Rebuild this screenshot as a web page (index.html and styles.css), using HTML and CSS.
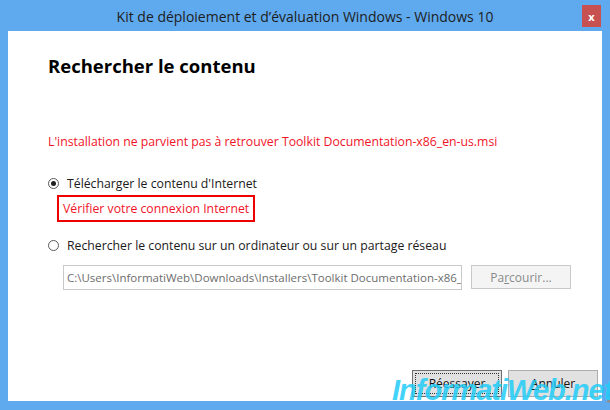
FILE: index.html
```html
<!DOCTYPE html>
<html lang="fr">

<head>
  <meta charset="UTF-8">
  <meta name="viewport" content="width=device-width, initial-scale=1.0">
  <title>Kit de déploiement et d'évaluation Windows</title>
  <link rel="stylesheet" href="styles.css">
</head>

<body>
  <div class="window">
    <!-- barre de titre -->
    <div class="titlebar">
      <span></span>
      <div class="title">Kit de déploiement et d’évaluation Windows - Windows 10</div>
      <div class="close">x</div>
    </div>

    <div class="content">
      <h1 class="heading">Rechercher le contenu</h1>

      <p class="error">L'installation ne parvient pas à retrouver Toolkit Documentation-x86_en-us.msi</p>

      <div class="options">
        <label class="option">
          <span class="radio checked"></span>
          Télécharger le contenu d'Internet
        </label>
        <div class="check-box">Vérifier votre connexion Internet</div>

        <label class="option second">
          <span class="radio"></span>
          Rechercher le contenu sur un ordinateur ou sur un partage réseau
        </label>
        <div class="path-row">
          <div class="path-field">C:\Users\InformatiWeb\Downloads\Installers\Toolkit Documentation-x86_en-us</div>
          <div class="btn disabled">Pa<u>r</u>courir...</div>
        </div>
      </div>

      <div class="actions">
        <div class="btn focused"><span class="focus-ring">Réessayer</span></div>
        <div class="btn"><u>A</u>nnuler</div>
      </div>
    </div>

    <!-- filigrane -->
    <div class="watermark">
      <span class="wm-text">InformatiWeb.net</span>
      <svg class="laptop" width="38" height="44" viewBox="0 0 38 44">
        <polygon points="12,2 36,6 34,30 10,28" fill="#2b3f8c" />
        <polygon points="14,5 33,8 31,27 12,25" fill="#3e78d8" />
        <path d="M17 12 L22 18 L28 11 M20 22 L24 16" stroke="#9fd0ff" stroke-width="1.5" fill="none" />
        <polygon points="10,28 34,30 24,42 0,38" fill="#8d8f93" />
        <polygon points="10,30 30,32 23,39 4,36" fill="#5f6166" />
      </svg>
    </div>
  </div>
</body>

</html>
```

FILE: styles.css
```css
body {
  margin: 0;
  font-family: "Open Sans", "Noto Sans", sans-serif;
  background: #5fa9ee;
}

.window {
  position: relative;
  width: 610px;
  height: 410px;
  background: #5fa9ee;
  display: flex;
  flex-direction: column;
  overflow: hidden;
}

.titlebar {
  height: 31px;
  display: grid;
  grid-template-columns: 1fr auto 1fr;
  align-items: center;
}

.title {
  font-size: 14px;
  color: #1d1d1d;
  padding-top: 1px;
}

.close {
  justify-self: end;
  align-self: start;
  margin: 5px 9px 0 0;
  width: 19px;
  height: 22px;
  background: #c75050;
  color: white;
  font-size: 11px;
  font-weight: bold;
  display: flex;
  align-items: center;
  justify-content: center;
}

.content {
  flex: 1;
  margin: 0 8px 9px 8px;
  background: white;
  padding: 0 4px 4px 40px;
  display: flex;
  flex-direction: column;
}

.heading {
  margin: 22px 0 0 0;
  font-size: 18.5px;
  font-weight: bold;
  color: #000;
}

.error {
  margin: 55px 0 0 0;
  font-size: 12.25px;
  color: #f01428;
}

.options {
  margin-top: 25px;
  font-size: 12.25px;
  color: #1a1a1a;
}

.option {
  display: flex;
  align-items: center;
  gap: 8px;
}

.option.second {
  margin-top: 15px;
}

.radio {
  width: 11px;
  height: 11px;
  border: 1px solid #5a5a5a;
  border-radius: 50%;
  box-sizing: border-box;
  display: flex;
  align-items: center;
  justify-content: center;
}

.radio.checked::after {
  content: "";
  width: 5px;
  height: 5px;
  border-radius: 50%;
  background: #222;
}

.check-box {
  display: inline-block;
  margin: 3px 0 0 9px;
  padding: 3px 4px 3px 4px;
  border: 2px solid #ee0000;
  color: #f01428;
}

.path-row {
  display: flex;
  gap: 9px;
  margin: 11px 0 0 15px;
}

.path-field {
  width: 399px;
  height: 25px;
  box-sizing: border-box;
  border: 1px solid #c9c9c9;
  padding: 0 3px;
  line-height: 23px;
  font-size: 11.5px;
  color: #6d6d6d;
  white-space: nowrap;
  overflow: hidden;
}

.btn {
  width: 90px;
  height: 27px;
  box-sizing: border-box;
  border: 1px solid #adadad;
  background: #e1e1e1;
  display: flex;
  align-items: center;
  justify-content: center;
  font-size: 12px;
  color: #111;
}

.btn.disabled {
  width: 100px;
  height: 24px;
  background: #f4f4f4;
  border-color: #c9c9c9;
  color: #8a8a8a;
}

.actions {
  margin-top: auto;
  display: flex;
  justify-content: flex-end;
  gap: 6px;
}

.btn.focused {
  border-color: #707070;
  padding: 2px;
}

.focus-ring {
  flex: 1;
  align-self: stretch;
  border: 1px dotted #333;
  display: flex;
  align-items: center;
  justify-content: center;
}

.watermark {
  position: absolute;
  left: 392px;
  bottom: 2px;
  display: flex;
  align-items: flex-end;
}

.wm-text {
  font-family: "Liberation Sans", sans-serif;
  font-style: italic;
  font-weight: bold;
  font-size: 29px;
  letter-spacing: -1px;
  color: #22ccf8;
  opacity: 0.85;
  line-height: 28px;
  margin-bottom: 4px;
}

.laptop {
  margin-left: -6px;
}
```
